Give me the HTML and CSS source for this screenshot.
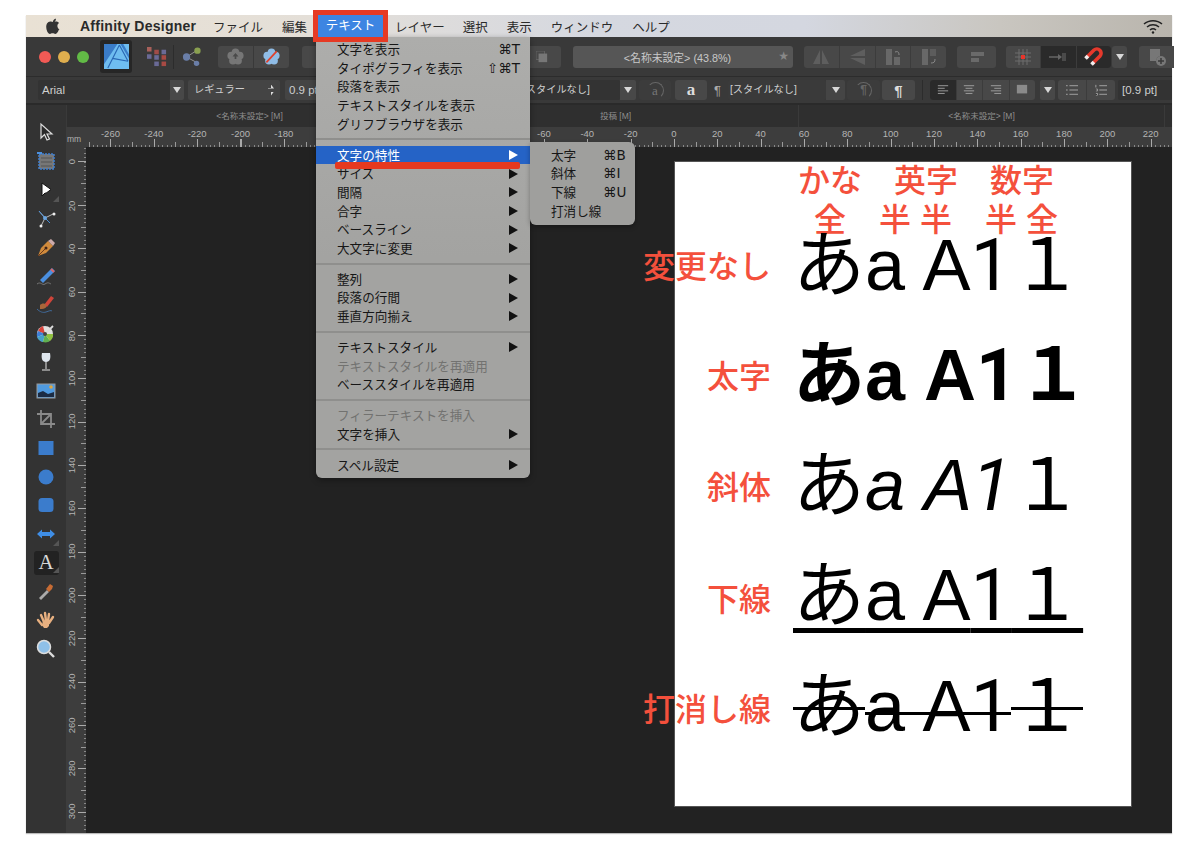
FILE: index.html
```html
<!DOCTYPE html>
<html lang="ja">
<head>
<meta charset="utf-8">
<title>Affinity Designer</title>
<link rel="stylesheet" href="styles.css">
</head>
<body>
<div class="app">
  <div class="menubar">
    <svg class="apple" viewBox="0 0 17 20"><path d="M12.200 1c.1 1.200-.4 2.300-1.100 3.100-.7.800-1.800 1.400-2.900 1.300-.1-1.100.4-2.300 1.100-3C10 1.600 11.200 1 12.200 1zM16 14.500c-.5 1.100-.7 1.600-1.300 2.600-.9 1.300-2 2.900-3.400 2.900-1.300 0-1.600-.8-3.300-.8s-2.100.8-3.300.8c-1.400 0-2.500-1.500-3.300-2.800C-.3 13.400-.5 9.100 1 6.900c1-1.600 2.600-2.500 4.100-2.500s2.500.8 3.700.8 2-.8 3.700-.8c1.400 0 2.800.7 3.700 2-3.300 1.800-2.800 6.500.8 8.100z"/></svg>
    <span class="m-app">Affinity Designer</span>
    <span class="m-i m-file">ファイル</span>
    <span class="m-i m-edit">編集</span>
    <span class="m-i m-text">テキスト</span>
    <span class="m-i m-layer">レイヤー</span>
    <span class="m-i m-sel">選択</span>
    <span class="m-i m-view">表示</span>
    <span class="m-i m-win">ウィンドウ</span>
    <span class="m-i m-help">ヘルプ</span>
    <svg class="wifi" viewBox="0 0 20 15" fill="none" stroke="#222" stroke-width="1.500"><path d="M1 5c5-4.500 13-4.500 18 0M4 8c3.500-3 8.500-3 12 0M7 11c1.800-1.400 4.200-1.400 6 0"/><circle cx="10" cy="13.500" r="1.200" fill="#222" stroke="none"/></svg>
  </div>

  <div class="toolbar">
    <span class="light red"></span><span class="light yellow"></span><span class="light green"></span>
    <span class="logo-box">
      <svg class="logo" viewBox="0 0 26 26"><rect width="26" height="26" fill="#6fbdf0"/><path d="M0 0h14L0 21z" fill="#3a7cc8"/><path d="M17 0h3l6 11v4z" fill="#3a7cc8"/><path d="M16 1L4 25M16 1l9 17M9 15l16 3" stroke="#2a68b4" stroke-width="1.200" fill="none"/></svg>
    </span>
    <svg class="persona" viewBox="0 0 22 22"><g fill="#6a6a96"><rect x="0" y="0" width="5" height="5" fill="#a8605a"/><rect x="8" y="3" width="5" height="5" fill="#a04c48"/><rect x="16" y="3" width="5" height="5"/><rect x="0" y="8" width="5" height="5"/><rect x="8" y="9" width="5" height="5"/><rect x="16" y="9" width="5" height="5" fill="#a84a44"/><rect x="8" y="16" width="5" height="5"/><rect x="16" y="16" width="5" height="5" fill="#a84a44"/></g></svg>
    <span class="tsep"></span>
    <svg class="share" viewBox="0 0 22 22" stroke="#9a9a9a" fill="#6a7ea8"><path d="M5 11L16 4M5 11l11 6" fill="none"/><circle cx="5" cy="11" r="4" stroke="none"/><circle cx="17" cy="4" r="3.500" fill="#8aa050" stroke="none"/><circle cx="16" cy="18" r="3" stroke="none"/></svg>
    <span class="btn b-flower">
      <svg class="ic16" viewBox="0 0 20 20"><g fill="#767676"><circle cx="10" cy="5" r="4.500"/><circle cx="15" cy="9" r="4.500"/><circle cx="13" cy="15" r="4.500"/><circle cx="7" cy="15" r="4.500"/><circle cx="5" cy="9" r="4.500"/><circle cx="10" cy="10" r="5"/></g><path d="M10 6l3.500 4H11v3H9v-3H6.500z" fill="#4a4a4a"/></svg>
    </span>
    <span class="btn b-flower2">
      <svg class="ic16" viewBox="0 0 20 20"><g fill="#8fbce6"><circle cx="10" cy="5" r="4.500"/><circle cx="15" cy="9" r="4.500"/><circle cx="13" cy="15" r="4.500"/><circle cx="7" cy="15" r="4.500"/><circle cx="5" cy="9" r="4.500"/><circle cx="10" cy="10" r="5"/></g><path d="M4 17L16 4" stroke="#e0402c" stroke-width="2"/></svg>
    </span>
    <span class="btn b-wide">
      <svg class="ic14" viewBox="0 0 14 14"><rect x="0" y="0" width="10" height="10" fill="none" stroke="#666"/><rect x="3" y="3" width="10" height="10" fill="#777"/></svg>
    </span>
    <span class="btn b-title"><span class="t-name">&lt;名称未設定&gt; (43.8%)</span><span class="t-star">★</span></span>
    <span class="btn b-flip">
      <span class="cell"><svg class="ic20" viewBox="0 0 20 20"><path d="M9 3v14H2zM11 3v14h7z" fill="#5e5e5e"/></svg></span>
      <span class="cell"><svg class="ic20" viewBox="0 0 20 20"><path d="M18 2v7H3zM18 11v7L3 11z" fill="#5e5e5e"/></svg></span>
      <span class="cell"><svg class="ic20" viewBox="0 0 20 20"><rect x="3" y="2" width="6" height="16" fill="#686868"/><rect x="11" y="10" width="6" height="8" fill="#686868"/><path d="M12 5c3-1 4 0 4 3" fill="none" stroke="#888"/></svg></span>
      <span class="cell"><svg class="ic20" viewBox="0 0 20 20"><rect x="3" y="2" width="6" height="16" fill="#686868"/><rect x="11" y="2" width="6" height="7" fill="#5c5c5c"/><path d="M16 12c0 3-1 4-4 4" fill="none" stroke="#888"/></svg></span>
    </span>
    <span class="btn b-align">
      <svg class="ic20" viewBox="0 0 20 20"><rect x="4" y="5" width="13" height="4" fill="#6a6a6a"/><rect x="4" y="11" width="8" height="4" fill="#6a6a6a"/></svg>
    </span>
    <span class="btn b-snap">
      <span class="cell"><svg class="ic20" viewBox="0 0 20 20" stroke="#6c6c6c"><path d="M2 6h16M2 10h16M2 14h16M6 2v16M10 2v16M14 2v16" fill="none"/><rect x="8" y="8" width="4" height="4" fill="#e8342a" stroke="none"/></svg></span>
      <span class="cell dark"><svg class="ic20" viewBox="0 0 20 20"><path d="M1 10h10" stroke="#666" stroke-width="1.500"/><path d="M10 7l4 3-4 3z" fill="#666"/><rect x="14" y="6" width="4" height="8" fill="#4a4a4a"/></svg></span>
      <span class="cell dark"><svg class="ic24" viewBox="0 0 24 24" fill="none"><path d="M4 13L12 5A4.250 4.250 0 0 1 18 11L10 19" stroke="#e5392c" stroke-width="3.600"/><path d="M3.500 13.500l2.500-2.500M9.500 19.500l2.500-2.500" stroke="#eee" stroke-width="3.600"/></svg></span>
    </span>
    <span class="btn b-arrow"><i class="tri"></i></span>
    <span class="btn b-add">
      <svg class="ic20" viewBox="0 0 20 20"><path d="M3 2h10v7a6 6 0 0 0-4 5H3z" fill="#777"/><circle cx="14" cy="14" r="5" fill="#777"/><path d="M14 11v6M11 14h6" stroke="#3a3a3a" stroke-width="1.500"/></svg>
    </span>
  </div>

  <div class="context">
    <span class="fld f-font">Arial</span><span class="btn c-arrow"><i class="tri"></i></span>
    <span class="fld f-weight"><span class="cj">レギュラー</span><i class="stepper"></i></span>
    <span class="fld f-size">0.9 pt</span>
    <span class="fld f-style1 cj">[スタイルなし]</span><span class="btn c-arrow a1"><i class="tri"></i></span>
    <span class="btn c-a off"><span class="serif ring">a</span></span>
    <span class="btn c-a2"><span class="serif">a</span></span>
    <span class="pil">¶</span>
    <span class="fld f-style2 cj">[スタイルなし]</span><span class="btn c-arrow a2"><i class="tri"></i></span>
    <span class="btn c-p off"><span class="para dim ring">¶</span></span>
    <span class="btn c-p2"><span class="para">¶</span></span>
    <span class="csep"></span>
    <span class="btn c-aligns">
      <span class="cell dark"><svg class="ic14" viewBox="0 0 14 14" stroke="#aaa"><path d="M1 2h12M1 5h8M1 8h12M1 11h8"/></svg></span>
      <span class="cell"><svg class="ic14" viewBox="0 0 14 14" stroke="#aaa"><path d="M1 2h12M3 5h8M1 8h12M3 11h8"/></svg></span>
      <span class="cell"><svg class="ic14" viewBox="0 0 14 14" stroke="#aaa"><path d="M1 2h12M5 5h8M1 8h12M5 11h8"/></svg></span>
      <span class="cell"><svg class="ic14" viewBox="0 0 14 14"><rect x="1" y="1" width="12" height="10" fill="#8a8a8a"/></svg></span>
    </span>
    <span class="btn c-arrow a3"><i class="tri"></i></span>
    <span class="btn c-lists">
      <span class="cell"><svg class="ic14" viewBox="0 0 14 14" stroke="#b0b0b0"><path d="M4 2h10M4 7h10M4 12h10M0 2h2M0 7h2M0 12h2"/></svg></span>
      <span class="cell"><svg class="ic14" viewBox="0 0 14 14" stroke="#b0b0b0"><path d="M5 2h9M5 7h9M5 12h9M1 1v3M1 6h2v2H1M1 11h2v2H1"/></svg></span>
    </span>
    <span class="fld f-space">[0.9 pt]</span>
  </div>

  <div class="workspace">
    <div class="tools">
      <span class="tool"><svg viewBox="0 0 20 20"><path d="M5 2v14l3.500-3.500L11 18l2.500-1-2.500-5h5z" fill="#2a2a2a" stroke="#ddd" stroke-width="1.200"/></svg></span>
      <span class="tool"><svg viewBox="0 0 20 20"><rect x="3" y="3" width="15" height="15" fill="#777" stroke="#3f7fd0" stroke-width="1.500" stroke-dasharray="2 1"/><path d="M5 7h11M5 11h11M5 15h11" stroke="#555"/><path d="M1 2h5" stroke="#4a90e0" stroke-width="2"/></svg></span>
      <span class="tool tri-badge"><svg viewBox="0 0 20 20"><path d="M6 3v13l3-3 1 .2 5-3.700z" fill="#fff" stroke="#111"/></svg></span>
      <span class="tool"><svg viewBox="0 0 20 20" fill="none"><path d="M3 3l6 7M17 6l-8 4M9 10l-4 8M9 10l5 5" stroke="#bbb"/><path d="M9 10l5 5M9 10L3 3" stroke="#4a8fd8"/><circle cx="9" cy="10" r="2" fill="#6aa5e0"/><circle cx="18" cy="6" r="1.500" fill="#eee"/><circle cx="5" cy="18" r="1.500" fill="#eee"/></svg></span>
      <span class="tool"><svg viewBox="0 0 20 20"><path d="M12 4l5 5-7 7-8 3 3-8z" fill="#d08a3c"/><path d="M12 4l5 5 2-3-4-4z" fill="#caa"/><path d="M2 19l7-7" stroke="#6b3a1c"/><circle cx="10" cy="11" r="1.500" fill="#402418"/></svg></span>
      <span class="tool"><svg viewBox="0 0 20 20" fill="none"><path d="M4 14L16 2l3 3L7 17z" fill="#4a8fe0"/><path d="M15 3l3 3" stroke="#d66" stroke-width="2"/><path d="M1 18c4-3 5 2 8 0s4-1 6 0" stroke="#777"/></svg></span>
      <span class="tool"><svg viewBox="0 0 20 20" fill="none"><path d="M8 11L15 2l3 2-7 9z" fill="#d0453a"/><path d="M4 11c2-2 5-2 6 0s0 4-6 4z" fill="#a8663a"/><path d="M1 15c3 3 6 4 9 3s5-2 6-1" stroke="#406a9a"/></svg></span>
      <span class="tool"><svg viewBox="0 0 20 20"><circle cx="9" cy="11" r="8" fill="#e0e0e0"/><path d="M9 11L2 8a8 8 0 0 1 5-5z" fill="#d8433c"/><path d="M9 11l-7-3a8 8 0 0 0-1 6z" fill="#3f7fd8"/><path d="M9 11l-8 3a8 8 0 0 0 6 5z" fill="#46a0c8"/><path d="M9 11l-2 8a8 8 0 0 0 7-1z" fill="#60b050"/><path d="M9 11l5 7a8 8 0 0 0 3-7z" fill="#90c040"/><path d="M9 11l8-8" stroke="#ddd" stroke-width="1.800"/><circle cx="9" cy="11" r="2" fill="#444"/></svg></span>
      <span class="tool"><svg viewBox="0 0 20 20"><path d="M6 1h8c1 5 0 9-4 9S5 6 6 1z" fill="#dfe6ee"/><path d="M10 10v7M6 18h8" stroke="#aaa" stroke-width="1.500"/></svg></span>
      <span class="tool"><svg viewBox="0 0 20 20"><rect x="1" y="3" width="18" height="14" fill="#4f9ae0" stroke="#999"/><path d="M2 16v-4l5-2 5 3 6-2v5z" fill="#1c2c44"/><circle cx="15" cy="6" r="1.800" fill="#e0a63c"/></svg></span>
      <span class="tool"><svg viewBox="0 0 20 20" fill="none" stroke="#8a8a8a" stroke-width="1.800"><path d="M5 1v14h14M1 5h14v14M5 15L15 5"/></svg></span>
      <span class="tool"><svg viewBox="0 0 20 20"><rect x="2.500" y="3" width="15" height="14" fill="#3b7ccc"/></svg></span>
      <span class="tool"><svg viewBox="0 0 20 20"><circle cx="10" cy="10" r="7.500" fill="#3b7ccc"/></svg></span>
      <span class="tool"><svg viewBox="0 0 20 20"><rect x="2.500" y="3" width="15" height="14" rx="3.500" fill="#3b7ccc"/></svg></span>
      <span class="tool tri-badge"><svg viewBox="0 0 20 20"><path d="M1 10l5-4.500V8h8V5.500l5 4.500-5 4.500V12H6v2.500z" fill="#3f8ee6"/></svg></span>
      <span class="tool tool-on tri-badge"><span class="a-glyph">A</span></span>
      <span class="tool"><svg viewBox="0 0 20 20"><path d="M3 17l8-8 2 2-8 8z" fill="#aaa"/><path d="M10 8l4-5 3 2-1 3-3 3z" fill="#c86c34"/></svg></span>
      <span class="tool"><svg viewBox="0 0 20 20" stroke="#e8b080" stroke-width="2.400" stroke-linecap="round" fill="none"><path d="M5 5l3 7M9 3l1 8M13 4l-1 7M17 7l-4 6M2 10l4 5"/><path d="M7 11h6v5l-2 2H8l-2-3z" fill="#e8b080" stroke="none"/></svg></span>
      <span class="tool"><svg viewBox="0 0 20 20" fill="none"><circle cx="8" cy="8" r="6.500" fill="#8fc0e8" stroke="#ddd" stroke-width="1.500"/><path d="M13 13l5 5" stroke="#ddd" stroke-width="2.400"/></svg></span>
    </div>
    <div class="main">
      <div class="tabs">
        <span class="tab">&lt;名称未設定&gt; [M]</span>
        <span class="tab">投稿 [M]</span>
        <span class="tab">&lt;名称未設定&gt; [M]</span>
        <span class="tab-end"></span>
      </div>
      <div class="hruler-row">
        <span class="corner">mm</span>
        <div class="hruler">
          <span>-260</span><span>-240</span><span>-220</span><span>-200</span><span>-180</span><span>-160</span><span>-140</span><span>-120</span><span>-100</span><span>-80</span><span>-60</span><span>-40</span><span>-20</span><span>0</span><span>20</span><span>40</span><span>60</span><span>80</span><span>100</span><span>120</span><span>140</span><span>160</span><span>180</span><span>200</span><span>220</span>
        </div>
      </div>
      <div class="stage">
        <div class="vruler">
          <span>0</span><span>20</span><span>40</span><span>60</span><span>80</span><span>100</span><span>120</span><span>140</span><span>160</span><span>180</span><span>200</span><span>220</span><span>240</span><span>260</span><span>280</span><span>300</span>
        </div>
        <div class="canvas">
          <div class="artboard">
            <div class="hdr">
              <div class="hdr1"><span>かな</span><span>英字</span><span>数字</span></div>
              <div class="hdr2"><span>全</span><span class="h-a">半</span><span class="h-b">半</span><span class="h-c">半</span><span class="h-b">全</span></div>
            </div>
            <div class="rows">
              <div class="row"><div class="lbl">変更なし</div><div class="sample"><span class="k">あ</span>a A<span class="one">1</span><span class="k">&#xFF11;</span></div></div>
              <div class="row"><div class="lbl">太字</div><div class="sample bold"><span class="k">あ</span>a A<span class="one">1</span><span class="k">&#xFF11;</span></div></div>
              <div class="row"><div class="lbl">斜体</div><div class="sample"><span class="k">あ</span><em>a A<span class="one">1</span></em><span class="k">&#xFF11;</span></div></div>
              <div class="row"><div class="lbl low">下線</div><div class="sample under"><span class="k">あ</span>a A<span class="one">1</span><span class="k">&#xFF11;</span></div></div>
              <div class="row"><div class="lbl low">打消し線</div><div class="sample strike"><span class="k st-k">あ</span><span class="st-l">a A<span class="one">1</span></span><span class="k st-k">&#xFF11;</span></div></div>
            </div>
          </div>
        </div>
      </div>
    </div>
  </div>

  <div class="menu">
    <div class="mi"><span>文字を表示</span><span class="sc">⌘T</span></div>
    <div class="mi"><span>タイポグラフィを表示</span><span class="sc">⇧⌘T</span></div>
    <div class="mi"><span>段落を表示</span></div>
    <div class="mi"><span>テキストスタイルを表示</span></div>
    <div class="mi"><span>グリフブラウザを表示</span></div>
    <div class="ms"></div>
    <div class="mi sub active"><span>文字の特性</span></div>
    <div class="mi sub"><span>サイズ</span></div>
    <div class="mi sub"><span>間隔</span></div>
    <div class="mi sub"><span>合字</span></div>
    <div class="mi sub"><span>ベースライン</span></div>
    <div class="mi sub"><span>大文字に変更</span></div>
    <div class="ms"></div>
    <div class="mi sub"><span>整列</span></div>
    <div class="mi sub"><span>段落の行間</span></div>
    <div class="mi sub"><span>垂直方向揃え</span></div>
    <div class="ms"></div>
    <div class="mi sub"><span>テキストスタイル</span></div>
    <div class="mi dis"><span>テキストスタイルを再適用</span></div>
    <div class="mi"><span>ベーススタイルを再適用</span></div>
    <div class="ms"></div>
    <div class="mi dis"><span>フィラーテキストを挿入</span></div>
    <div class="mi sub"><span>文字を挿入</span></div>
    <div class="ms"></div>
    <div class="mi sub"><span>スペル設定</span></div>
  </div>
  <div class="submenu">
    <div class="si"><span>太字</span><span class="ssc">⌘B</span></div>
    <div class="si"><span>斜体</span><span class="ssc">⌘I</span></div>
    <div class="si"><span>下線</span><span class="ssc">⌘U</span></div>
    <div class="si"><span>打消し線</span></div>
  </div>
</div>
</body>
</html>
```

FILE: styles.css
```css
* { box-sizing: border-box; }
html, body { margin: 0; padding: 0; background: #fff; }
body {
  width: 1200px;
  height: 848px;
  overflow: hidden;
  font-family: "Liberation Sans", "Noto Sans CJK JP", "DejaVu Sans", sans-serif;
}
.app {
  position: relative;
  width: 1146px;
  height: 818px;
  margin: 15px 0 0 26px;
  display: flex;
  flex-direction: column;
  background: #333;
  box-shadow: 0 1px 1px #bbb;
}

/* macOS menu bar */
.menubar {
  height: 22px;
  flex: none;
  display: flex;
  align-items: center;
  background: linear-gradient(90deg, #e9e1d4 0%, #e4dfd8 25%, #d5d8e0 50%, #d4d7e0 68%, #c9c6c0 85%, #b9b5ad 100%);
  color: #2a2a2a;
  font-size: 12.5px;
}
.apple { width: 14px; height: 16px; margin-left: 20px; fill: #333; }
.m-app { font-weight: 700; font-size: 14px; letter-spacing: .25px; margin-left: 20px; width: 115px; white-space: nowrap; }
.m-i { white-space: nowrap; }
.m-file { margin-left: 18px; }
.m-edit { margin-left: 19px; }
.m-text {
  position: relative;
  z-index: 5;
  margin-left: 11px;
  width: 65px;
  height: 22px;
  line-height: 22px;
  text-align: center;
  background: #3d85e2;
  color: #fff;
  outline: 5px solid #e63a24;
}
.m-layer { margin-left: 12px; }
.m-sel { margin-left: 18px; }
.m-view { margin-left: 19px; }
.m-win { margin-left: 19px; }
.m-help { margin-left: 19px; }
.wifi { width: 20px; height: 15px; margin-left: auto; margin-right: 9px; }

/* top toolbar */
.toolbar {
  height: 40px;
  flex: none;
  display: flex;
  align-items: center;
  background: #393939;
  border-bottom: 1px solid #2c2c2c;
}
.light { width: 12px; height: 12px; border-radius: 50%; margin-left: 7px; flex: none; }
.light.red { background: #f25a55; margin-left: 13px; }
.light.yellow { background: #dfae4e; }
.light.green { background: #62bb46; }
.logo-box {
  width: 32px; height: 33px; margin-left: 11px; flex: none;
  background: #262626; border-radius: 3px;
  display: flex; align-items: center; justify-content: center;
}
.logo { width: 25px; height: 25px; }
.persona { width: 20px; height: 20px; margin-left: 15px; flex: none; }
.tsep { width: 1px; height: 24px; background: #2c2c2c; margin-left: 6px; flex: none; }
.share { width: 20px; height: 20px; margin-left: 8px; flex: none; }
.btn {
  display: flex; align-items: center; justify-content: center; flex: none;
  background: #484848; border-radius: 3px;
  height: 22px;
}
.cell { flex: 1; height: 100%; display: flex; align-items: center; justify-content: center; border-right: 1px solid #3c3c3c; }
.cell:last-child { border-right: 0; }
.cell.dark { background: #2a2a2a; }
.ic14 { width: 12px; height: 12px; }
.ic16 { width: 17px; height: 17px; }
.ic20 { width: 20px; height: 20px; }
.ic24 { width: 24px; height: 24px; }
.b-flower { width: 35px; margin-left: 16px; border-radius: 3px 0 0 3px; }
.b-flower2 { width: 35px; margin-left: 1px; border-radius: 0 3px 3px 0; }
.b-wide { width: 259px; margin-left: 13px; justify-content: flex-end; padding-right: 13px; }
.b-title { width: 220px; margin-left: 12px; padding-right: 11px; background: #565656; position: relative; }
.t-name { font-size: 10.8px; color: #c8c8c8; }
.t-star { position: absolute; right: 4px; top: 3px; font-size: 12px; color: #888; font-family: "DejaVu Sans", sans-serif; }
.b-flip { width: 142px; margin-left: 11px; overflow: hidden; }
.b-align { width: 39px; margin-left: 11px; }
.b-snap { width: 105px; margin-left: 10px; overflow: hidden; }
.b-arrow { width: 15px; margin-left: 1px; }
.b-add { width: 35px; margin-left: 12px; border-radius: 3px 0 0 3px; }
.tri { width: 0; height: 0; border-left: 4px solid transparent; border-right: 4px solid transparent; border-top: 6px solid #d8d8d8; }

/* context bar */
.context {
  height: 28px;
  flex: none;
  display: flex;
  align-items: center;
  background: #393939;
  font-size: 11.5px;
  color: #cfcfcf;
  border-bottom: 2px solid #2a2a2a;
}
.context .btn { height: 20px; }
.cj { font-size: 10.2px; }
.fld { height: 20px; line-height: 20px; padding-left: 4px; flex: none; background: #333; white-space: nowrap; overflow: hidden; border-radius: 2px; }
.f-font { width: 132px; margin-left: 12px; }
.c-arrow { width: 14px; border-radius: 0 2px 2px 0; }
.f-weight { width: 92px; margin-left: 4px; background: #444; padding-left: 6px; display: flex; justify-content: space-between; align-items: center; }
.stepper { width: 6px; height: 11px; margin-right: 6px; background: linear-gradient(#ddd 0 4px, transparent 4px 7px, #ddd 7px); clip-path: polygon(50% 0, 100% 36%, 0 36%, 0 64%, 100% 64%, 50% 100%); }
.f-size { width: 36px; margin-left: 5px; background: #444; }
.f-style1 { width: 299px; margin-left: 0; padding-left: 202px; background: #333; }
.a1 { width: 16px; }
.c-a { width: 32px; margin-left: 3px; }
.c-a.off, .c-p.off { background: #3c3c3c; }
.c-a2 { width: 32px; margin-left: 4px; }
.serif { font-family: "Liberation Serif", serif; font-size: 17px; font-weight: 700; color: #ddd; }
.off .serif { color: #777; font-size: 13px; font-weight: 400; }
.ring {
  width: 17px; height: 17px; line-height: 15px; text-align: center;
  border: 1px solid transparent; border-top-color: #666; border-right-color: #666; border-radius: 50%;
}
.pil { width: 21px; text-align: center; margin-left: 0; font-size: 13px; color: #aaa; flex: none; }
.f-style2 { width: 98px; margin-left: 0; padding-left: 2px; background: #3a3a3a; }
.a2 { width: 19px; background: #454545; }
.c-p { width: 33px; margin-left: 2px; }
.c-p2 { width: 33px; margin-left: 2px; }
.para { font-size: 15px; font-weight: 700; color: #ddd; }
.para.dim { color: #666; font-size: 12px; }
.csep { width: 1px; height: 20px; background: #2c2c2c; margin: 0 7px; flex: none; }
.c-aligns { width: 105px; overflow: hidden; }
.a3 { width: 15px; margin-left: 5px; border-radius: 2px; }
.c-lists { width: 57px; margin-left: 3px; overflow: hidden; }
.f-space { width: 54px; margin-left: 3px; background: #333; }

/* workspace */
.workspace { flex: 1; min-height: 0; display: flex; }
.tools {
  width: 40px; flex: none;
  display: flex; flex-direction: column; align-items: center;
  padding-top: 13px;
  background: #333;
}
.tool {
  position: relative;
  width: 25px; height: 28.7px; flex: none;
  display: flex; align-items: center; justify-content: center;
}
.tool svg { width: 20px; height: 20px; }
.tri-badge::after {
  content: "";
  position: absolute; right: 0; bottom: 2px;
  border-left: 6px solid transparent;
  border-bottom: 6px solid #555;
}
.tool-on { background: #222; border-radius: 3px; height: 24px; margin: 2.350px 0; }
.a-glyph { font-family: "Liberation Serif", serif; font-size: 21px; color: #d8d8d8; }
.main { flex: 1; min-width: 0; display: flex; flex-direction: column; }
.tabs { height: 22px; flex: none; display: flex; background: #2f2f2f; }
.tab {
  width: 366px; flex: none; text-align: center; line-height: 22px;
  font-size: 8.500px; color: #8e8e8e; border-left: 1px solid #3a3a3a;
}
.tab-end { flex: 1; border-left: 1px solid #3a3a3a; }
.hruler-row { height: 20px; flex: none; display: flex; background: #3d3d3d; }
.corner { width: 20px; flex: none; font-size: 8.500px; color: #b0b0b0; padding: 7px 0 0 1px; }
.hruler {
  flex: 1; min-width: 0; display: flex; overflow: hidden;
  padding-left: 2.800px;
  font-size: 9.500px; color: #b4b4b4;
  background:
    repeating-linear-gradient(90deg, transparent 0 24.450px, #aaa 24.450px 25.450px, transparent 25.450px 43.350px) left bottom / 100% 8px no-repeat,
    repeating-linear-gradient(90deg, transparent 0 2.775px, #999 2.775px 3.775px, transparent 3.775px 21.675px) left bottom / 100% 5px no-repeat,
    repeating-linear-gradient(90deg, transparent 0 2.775px, #888 2.775px 3.775px, transparent 3.775px 4.335px) left bottom / 100% 2px no-repeat;
}
.hruler span { width: 43.350px; flex: none; text-align: center; line-height: 13px; }
.stage { flex: 1; min-height: 0; display: flex; }
.vruler {
  width: 20px; flex: none; display: flex; flex-direction: column; overflow: hidden;
  font-size: 9.500px; color: #b4b4b4;
  background:
    repeating-linear-gradient(180deg, transparent 0 14.500px, #aaa 14.500px 15.500px, transparent 15.500px 43.350px) right top / 8px 100% no-repeat,
    repeating-linear-gradient(180deg, transparent 0 14.500px, #999 14.500px 15.500px, transparent 15.500px 21.675px) right top / 5px 100% no-repeat,
    repeating-linear-gradient(180deg, transparent 0 1.500px, #888 1.500px 2.500px, transparent 2.500px 4.335px) right top / 2px 100% no-repeat,
    #3d3d3d;
}
.vruler span {
  height: 43.350px; flex: none;
  writing-mode: vertical-rl; transform: rotate(180deg);
  text-align: center; line-height: 12px;
  width: 13px;
}
.vruler span:first-child { margin-top: -6.700px; }
.canvas { flex: 1; min-width: 0; background: #222; overflow: hidden; padding: 15px 0 0 589px; }

/* artboard */
.artboard { width: 456px; height: 644px; background: #fff; box-shadow: 0 0 0 1px #555; }
.hdr { color: #f4503c; font-size: 32px; font-weight: 500; line-height: 39px; }
.hdr1 { display: flex; gap: 32px; padding-left: 123px; }
.hdr2 { display: flex; padding-left: 139px; }
.h-a { margin-left: 33px; }
.h-b { margin-left: 9px; }
.h-c { margin-left: 33px; }
.rows { margin-top: -28px; }
.row { height: 110.250px; display: flex; align-items: center; }
.lbl {
  width: 96px; flex: none; display: flex; justify-content: flex-end;
  white-space: nowrap; color: #f4503c; font-size: 32px; font-weight: 500; line-height: 40px;
}
.lbl.low { padding-top: 4px; }
.sample {
  margin: 0 0 10px 22px; white-space: pre; color: #000;
  font-size: 72px; line-height: 110px; word-spacing: 1.500px;
}
.k { font-family: "Noto Sans CJK JP", sans-serif; }
.one { font-family: Roboto, "Liberation Sans", sans-serif; }
.bold { font-weight: 700; }
.under { text-decoration: underline 5px #000; text-underline-offset: 8px; text-decoration-skip-ink: none; }
.st-k, .st-l { display: inline-block; background-image: linear-gradient(#000, #000); background-repeat: no-repeat; background-size: 100% 3px; }
.st-k { background-position: 0 62px; }
.st-l { background-position: 0 61px; }

/* open menu */
.menu, .submenu {
  position: absolute;
  background: #a6a6a4;
  color: #161616;
  font-size: 12.6px;
  font-family: "Noto Sans CJK JP", "DejaVu Sans", sans-serif;
}
.menu {
  left: 290px; top: 22px; width: 214px; height: 441px; padding-top: 3px;
  border-radius: 0 0 6px 6px;
  background: linear-gradient(#adadab, #a3a3a1 50%, #a3a3a1);
  box-shadow: 0 2px 6px rgba(0,0,0,.35);
}
.mi {
  position: relative;
  height: 18.700px; line-height: 18.700px;
  padding: 0 10px 0 21px;
  display: flex; justify-content: space-between; align-items: center;
  white-space: nowrap;
}
.mi.dis { color: #727270; }
.mi.active { background: #2563c6; color: #fff; }
.mi.sub::after {
  content: "";
  margin-right: 2px;
  border-left: 9px solid #111;
  border-top: 5px solid transparent;
  border-bottom: 5px solid transparent;
}
.mi.active::after { border-left-color: #fff; }
.mi.active::before {
  content: "";
  position: absolute; left: 19px; top: 16px;
  width: 185px; height: 7px;
  background: #e6391f;
  border-radius: 2px;
  z-index: 3;
}
.sc { font-family: "DejaVu Sans", sans-serif; font-size: 13.5px; }
.ms { height: 12.100px; position: relative; }
.ms::after { content: ""; position: absolute; left: 0; right: 0; top: 5px; height: 2px; background: #8f8f8d; }
.submenu {
  left: 504px; top: 127px; width: 105px; height: 83px; padding-top: 3.500px;
  border-radius: 0 6px 6px 6px;
  background: #9f9f9d;
  box-shadow: 0 2px 5px rgba(0,0,0,.3);
}
.si { height: 18.700px; line-height: 18.700px; padding-left: 21px; display: flex; white-space: nowrap; }
.si span:first-child { width: 52px; }
.ssc { font-family: "DejaVu Sans", sans-serif; font-size: 13.5px; }
```
